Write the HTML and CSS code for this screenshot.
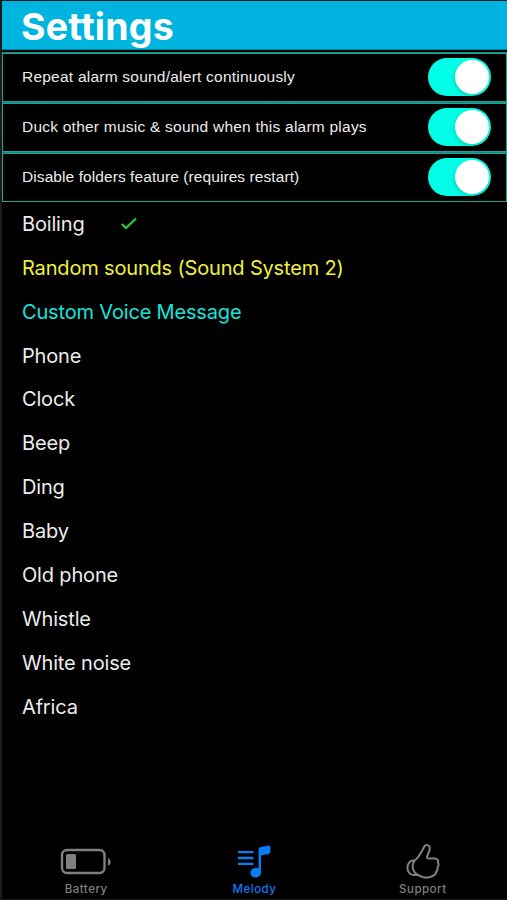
FILE: index.html
```html
<!DOCTYPE html>
<html lang="en">
<head>
    <meta charset="UTF-8">
    <meta name="viewport" content="width=device-width, initial-scale=1.0">
    <title>Settings</title>
    <link rel="stylesheet" href="styles.css">
</head>
<body>

    <header>
        <h1>Settings</h1>
    </header>

    <section class="options">
        <label class="option">
            <span>Repeat alarm sound/alert continuously</span>
            <input type="checkbox" class="switch" checked>
        </label>
        <label class="option">
            <span>Duck other music &amp; sound when this alarm plays</span>
            <input type="checkbox" class="switch" checked>
        </label>
        <label class="option">
            <span class="folders">Disable folders feature (requires restart)</span>
            <input type="checkbox" class="switch" checked>
        </label>
    </section>

    <ul class="sounds">
        <li>Boiling
            <svg class="check" width="18" height="14" viewBox="0 0 18 14">
                <path d="M1.8 7 L6 11 L16 1.5" fill="none" stroke="#2fc83a" stroke-width="2.3"/>
            </svg>
        </li>
        <li class="random">Random sounds (Sound System 2)</li>
        <li class="custom">Custom Voice Message</li>
        <li>Phone</li>
        <li>Clock</li>
        <li>Beep</li>
        <li>Ding</li>
        <li>Baby</li>
        <li>Old phone</li>
        <li>Whistle</li>
        <li>White noise</li>
        <li>Africa</li>
    </ul>

    <nav>
        <a class="tab">
            <svg width="52" height="40" viewBox="0 0 52 40">
                <rect x="2" y="10" width="42.5" height="23" rx="5" fill="none" stroke="#808080" stroke-width="2.4"/>
                <rect x="6" y="14" width="10" height="15" rx="1.5" fill="#808080"/>
                <path d="M48 18 C51.5 19.5 51.5 24.5 48 26 Z" fill="#808080"/>
            </svg>
            <span>Battery</span>
        </a>
        <a class="tab active">
            <svg width="40" height="40" viewBox="0 0 40 40">
                <path d="M4 12.2H19.5M4 18H19.5M4 23.8H19.5" fill="none" stroke="#087cf5" stroke-width="2.3"/>
                <path d="M24.6 32V9.2Q24.6 7.4 26.6 7L34 5.5Q36.4 5 36.4 7.2V11.7Q36.4 13.5 34.4 13.9L27 15.4V32Z" fill="#087cf5"/>
                <ellipse cx="21.8" cy="32.6" rx="5.4" ry="4.8" fill="#087cf5" transform="rotate(-18 21.8 32.6)"/>
            </svg>
            <span>Melody</span>
        </a>
        <a class="tab">
            <svg width="40" height="40" viewBox="0 0 40 40">
                <g transform="translate(0 1)" fill="none" stroke="#808080" stroke-width="2" stroke-linecap="round" stroke-linejoin="round">
                    <path d="M12 19.2C15.5 16.5 18 12 20.3 7.5C21.2 5 22 4 23.6 4C26.5 4 27.4 6.6 26.4 9.6C25.6 12.3 24.2 14.2 23.9 16.5C24 17.4 24.6 17.6 25.6 17.6H31.5C34.6 17.6 35.8 19.5 34.9 21.6C35.9 23.2 35.6 25.2 34.5 26.3C35 28.3 34.4 29.7 33.2 30.6C33.2 32.6 32 34.2 29.7 35C26 36.8 21 37 17.5 35.2C14.5 34 12.2 32.5 11.2 30.8C8.8 27 9.2 21.8 12 19.2Z"/>
                    <path d="M10.8 19.5H9.6C6.8 19.8 4.4 23 4.4 26.7C4.4 30.8 7.2 34 10.5 34H14"/>
                </g>
            </svg>
            <span>Support</span>
        </a>
    </nav>

</body>
</html>
```

FILE: styles.css
```css
* {
    box-sizing: border-box;
}

body {
    margin: 0;
    height: 900px;
    display: flex;
    flex-direction: column;
    background: #000;
    color: #ececec;
    font-family: Inter, sans-serif;
    border-top: 1px solid #101a20;
    border-left: 2px solid #1b1b1b;
    border-bottom: 1px solid #1b1719;
}

header {
    height: 49px;
    background: #00b4e0;
    border-bottom: 1px solid #0586a8;
    padding-left: 19px;
}

h1 {
    margin: 0;
    color: white;
    font-size: 37.5px;
    line-height: 51px;
    font-weight: 700;
    letter-spacing: 0.2px;
}

.options {
    margin-top: 2px;
    height: 150px;
    display: grid;
    grid-template-rows: 49px 49px 49px;
    gap: 1px;
    background: #0e8a7e;
    border-top: 1px solid #0e8a7e;
}

.option {
    display: flex;
    align-items: center;
    justify-content: space-between;
    padding: 0 15px 2px 19px;
    background: #000;
    border: 1px solid #1fa497;
    font-family: "Liberation Sans", sans-serif;
    font-size: 15.5px;
    letter-spacing: 0.23px;
}

.folders {
    letter-spacing: 0.08px;
}

.switch {
    appearance: none;
    margin: 0;
    width: 63px;
    height: 38px;
    border-radius: 19px;
    background: #00ffe6;
    position: relative;
}

.switch::after {
    content: "";
    position: absolute;
    top: 2px;
    right: 2px;
    width: 34px;
    height: 34px;
    border-radius: 50%;
    background: white;
    box-shadow: -1px 2px 4px rgba(0, 0, 0, 0.15);
}

.sounds {
    flex: 1;
    list-style: none;
    margin: 0;
    padding: 0 0 0 20px;
    font-size: 20px;
    letter-spacing: -0.17px;
}

.sounds li {
    display: flex;
    align-items: center;
    height: 43.89px;
}

.check {
    margin-left: 35px;
}

.random {
    color: #f0f03c;
}

.custom {
    color: #14e6dc;
}

nav {
    display: flex;
    height: 59px;
}

.tab {
    flex: 1;
    display: flex;
    flex-direction: column;
    align-items: center;
    color: #808080;
    font-size: 11.5px;
    font-weight: 500;
    line-height: 14px;
    letter-spacing: 0.5px;
}

.tab span {
    margin-top: 2px;
}

.active {
    color: #087cf5;
}
```
